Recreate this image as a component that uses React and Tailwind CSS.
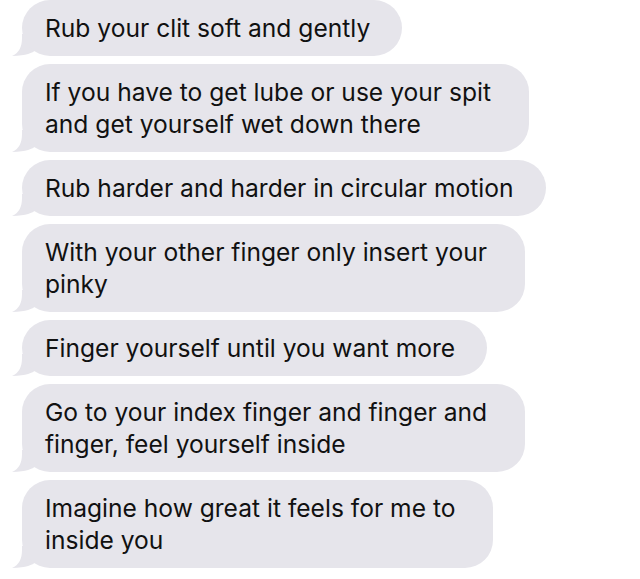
import React from "react";

const MESSAGES = [
  ["Rub your clit soft and gently"],
  ["If you have to get lube or use your spit", "and get yourself wet down there"],
  ["Rub harder and harder in circular motion"],
  ["With your other finger only insert your", "pinky"],
  ["Finger yourself until you want more"],
  ["Go to your index finger and finger and", "finger, feel yourself inside"],
  ["Imagine how great it feels for me to", "inside you"],
];

function Tail() {
  return (
    <svg
      className="absolute -left-[10px] bottom-0"
      width="24"
      height="22"
      viewBox="0 0 24 22"
    >
      <path d="M10 0 L24 0 L24 16 C20 19 15 21.5 0 22 C7 19 10 13 10 4 Z" fill="#e6e5eb" />
    </svg>
  );
}

function Bubble({ lines }) {
  const multi = lines.length > 1;
  return (
    <div className="relative w-fit">
      <Tail />
      <div
        className={
          "relative bg-[#e6e5eb] rounded-[28px] pl-[23px] py-[12px] text-[24.6px] leading-[32px] text-[#111111] " +
          (multi ? "pr-[38px]" : "pr-[32px]")
        }
      >
        {lines.map((l, i) => (
          <div key={i} className="whitespace-nowrap">{l}</div>
        ))}
      </div>
    </div>
  );
}

export default function App() {
  return (
    <div
      className="w-[640px] h-[579px] bg-white overflow-hidden"
      style={{ fontFamily: "Inter, 'Liberation Sans', sans-serif" }}
    >
      <div className="flex flex-col gap-[8px] pl-[22px]">
        {MESSAGES.map((lines, i) => (
          <Bubble key={i} lines={lines} />
        ))}
      </div>
    </div>
  );
}
